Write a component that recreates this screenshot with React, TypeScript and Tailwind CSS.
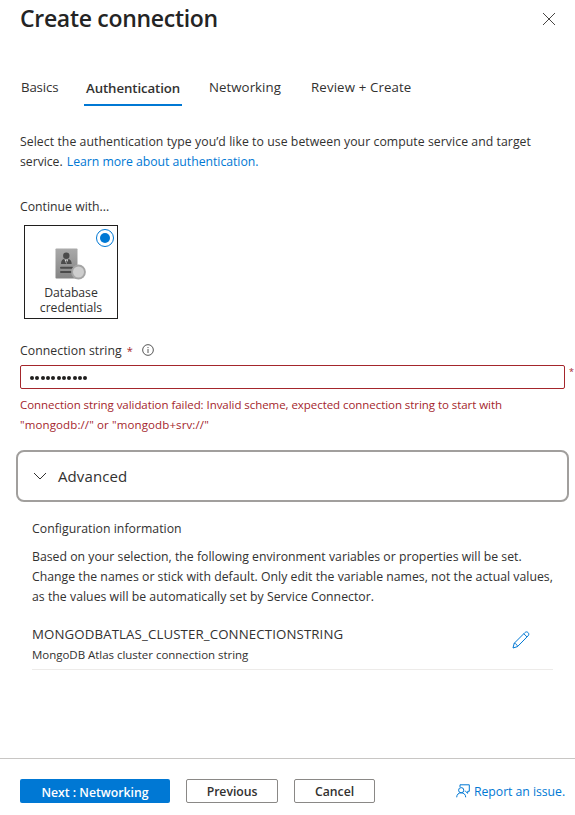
import type { ReactNode } from "react";

function Line({ className, children }: { className: string; children: ReactNode }) {
  return <span className={`block whitespace-nowrap ${className}`}>{children}</span>;
}

function CloseIcon() {
  return (
    <svg width="14" height="14" viewBox="0 0 14 14" fill="none" stroke="#484644" strokeWidth="1">
      <path d="M1 1l12 12M13 1L1 13" />
    </svg>
  );
}

function InfoIcon() {
  return (
    <svg width="12" height="12" viewBox="0 0 12 12" fill="none" stroke="#444" strokeWidth="0.9">
      <circle cx="6" cy="6" r="5.35" />
      <path d="M6 5v4M6 3v1.1" />
    </svg>
  );
}

function CertificateIcon() {
  return (
    <svg width="32" height="32" viewBox="0 0 32 32">
      <defs>
        <linearGradient id="page" x1="0" y1="0" x2="0" y2="1">
          <stop offset="0" stopColor="#aaa" />
          <stop offset="1" stopColor="#858585" />
        </linearGradient>
      </defs>
      <rect x="0.5" y="0.5" width="22" height="30" rx="0.8" fill="url(#page)" />
      <path d="M6 16c0-3.5 1.7-5 3-5l2.3 1.5L13.6 11c1.6.3 3.1 2 3.1 5z" fill="#4b4b4b" />
      <path d="M9.5 11.2l1.800 4.800 1.900-4.800-1.900 1z" fill="#eee" />
      <path d="M11.300 12l.7 1-.7 3-.7-3z" fill="#555" />
      <circle cx="11.300" cy="7.800" r="3.200" fill="#4b4b4b" />
      <path d="M6 19.800h11M6 24h11" stroke="#4b4b4b" strokeWidth="2" strokeLinecap="round" />
      <circle cx="23.500" cy="24" r="7.400" fill="#a5a5a5" />
      <circle cx="23.500" cy="24" r="5.500" fill="#cecece" />
    </svg>
  );
}

function ChevronIcon() {
  return (
    <svg width="14" height="8" viewBox="0 0 14 8" fill="none" stroke="#323130" strokeWidth="1">
      <path d="M1 1l6 6 6-6" />
    </svg>
  );
}

function PencilIcon() {
  return (
    <svg width="18" height="18" viewBox="0 0 18 18" fill="none" stroke="#0078d4" strokeWidth="1" strokeLinejoin="round">
      <path d="M1 17l1.200-4.700L12.800 1.700c1.100-1.100 2.400-1 3.300-.1s1 2.200-.1 3.300L5.500 15.600z" />
      <path d="M11.800 2.700l3.300 3.300M2.200 12.300c1.900.3 3 1.400 3.300 3.300" />
    </svg>
  );
}

function FeedbackIcon() {
  return (
    <svg width="14" height="14" viewBox="0 0 14 14" fill="none" stroke="#0078d4" strokeWidth="1">
      <path d="M4 3V.8h9.300v6.500h-1.600v2L9.500 7.300H8.800" />
      <circle cx="5.200" cy="6.200" r="2.600" />
      <path d="M.7 13.300c0-2.700 1.800-4.500 4.500-4.500s4.500 1.800 4.500 4.500" />
    </svg>
  );
}

export default function App() {
  return (
    <div className="flex h-[815px] w-[575px] flex-col overflow-hidden bg-white font-['Open_Sans','Noto_Sans',sans-serif] text-[12.250px] leading-5 text-[#323130]">
      <header className="flex h-[38px] shrink-0 items-center justify-between pl-5 pr-[19px]">
        <h1 className="whitespace-nowrap pb-[2px] text-[23px] font-semibold leading-[36px] tracking-[-0.3px] text-[#242424]">Create connection</h1>
        <button aria-label="Close"><CloseIcon /></button>
      </header>

      <nav className="mt-[36px] flex h-8 shrink-0 whitespace-nowrap text-[13.250px] leading-[27px]">
        <span className="w-[63px] pl-[21px] tracking-[-0.150px]">Basics</span>
        <span className="ml-[21px] w-[98px] border-b-2 border-[#0078d4] pl-[2px] font-semibold leading-[29px] tracking-[-0.100px]">Authentication</span>
        <span className="ml-[27px] w-[102px] tracking-[0.050px]">Networking</span>
        <span className="tracking-[0.130px]">Review + Create</span>
      </nav>

      <main className="flex flex-1 flex-col">
        <p className="mt-[26px] pl-5">
          <Line className="tracking-[0.058px]">Select the authentication type you’d like to use between your compute service and target</Line>
          <Line className="tracking-[-0.030px]">service. <a className="ml-[1px] text-[#0078d4]">Learn more about authentication.</a></Line>
        </p>
        <p className="mt-[25px] pl-5">Continue with...</p>

        <div className="ml-6 mt-[8px] flex h-[94px] w-[94px] flex-col border border-[#201f1e]">
          <div className="flex h-[22px] justify-end pr-[3px] pt-[3px]">
            <span className="flex h-[18px] w-[18px] items-center justify-center rounded-full border border-[#0078d4]">
              <span className="h-[10px] w-[10px] rounded-full bg-[#0078d4]" />
            </span>
          </div>
          <div className="ml-[30px] h-[37px]"><CertificateIcon /></div>
          <div className="text-center leading-[15px] tracking-[-0.050px]">
            Database credentials
          </div>
        </div>

        <div className="mt-[22px] flex h-5 items-center pl-5">
          <Line className="tracking-[0.050px]">Connection string</Line>
          <span className="ml-[5px] text-[11px] text-[#a4262c]">*</span>
          <span className="ml-[9px] pb-[2px]"><InfoIcon /></span>
        </div>
        <div className="mt-1 flex h-6 pl-5">
          <div className="flex w-[545px] items-center gap-[1.350px] rounded-[2px] border border-[#a4262c] pl-[9px] pt-[2px]">
            {Array.from({ length: 11 }, (_, i) => (
              <span key={i} className="h-1 w-1 rounded-full bg-[#201f1e]" />
            ))}
          </div>
          <span className="ml-1 text-[9px] leading-[13px] text-[#a4262c]">*</span>
        </div>
        <div className="mt-[6px] pl-5 text-[11.500px] text-[#a4262c]">
          <Line className="tracking-[-0.055px]">Connection string validation failed: Invalid scheme, expected connection string to start with</Line>
          <Line className="tracking-[0.120px]">"mongodb://" or "mongodb+srv://"</Line>
        </div>

        <button className="ml-4 mt-[15px] flex h-[52px] w-[553px] items-center rounded-lg border-2 border-[#a19f9d] pl-[15px] text-[15px]">
          <ChevronIcon />
          <span className="ml-[11px] tracking-[0.100px]">Advanced</span>
        </button>

        <section className="ml-8 mt-[17px] w-[521px]">
          <h2 className="tracking-[0.030px]">Configuration information</h2>
          <p className="mt-2">
            <Line className="tracking-[0.012px]">Based on your selection, the following environment variables or properties will be set.</Line>
            <Line className="tracking-[0.015px]">Change the names or stick with default. Only edit the variable names, not the actual values,</Line>
            <Line className="tracking-[0.030px]">as the values will be automatically set by Service Connector.</Line>
          </p>
          <div className="mt-[15px] flex h-[48px] items-start justify-between border-b border-[#edebe9] pr-[23px]">
            <div className="pt-[2px]">
              <Line className="text-[13.250px] tracking-[0.120px]">MONGODBATLAS_CLUSTER_CONNECTIONSTRING</Line>
              <Line className="text-[11.500px] leading-[21px] tracking-[-0.030px]">MongoDB Atlas cluster connection string</Line>
            </div>
            <span className="pt-[9px]"><PencilIcon /></span>
          </div>
        </section>
      </main>

      <footer className="flex h-[57px] shrink-0 items-start whitespace-nowrap border-t border-[#c8c6c4] pt-5">
        <button className="ml-5 h-6 w-[150px] rounded-[2px] bg-[#0078d4] pt-[3px] font-semibold text-white">Next : Networking</button>
        <button className="ml-4 h-6 w-[92px] rounded-[2px] border border-[#8a8886] pt-[2px] font-semibold tracking-[-0.050px]">Previous</button>
        <button className="ml-4 h-6 w-[81px] rounded-[2px] border border-[#8a8886] pt-[2px] font-semibold">Cancel</button>
        <a className="ml-[81px] flex h-6 items-center text-[#0078d4]"><FeedbackIcon /><span className="ml-1 pt-[2px] tracking-[-0.040px]">Report an issue.</span></a>
      </footer>
    </div>
  );
}
